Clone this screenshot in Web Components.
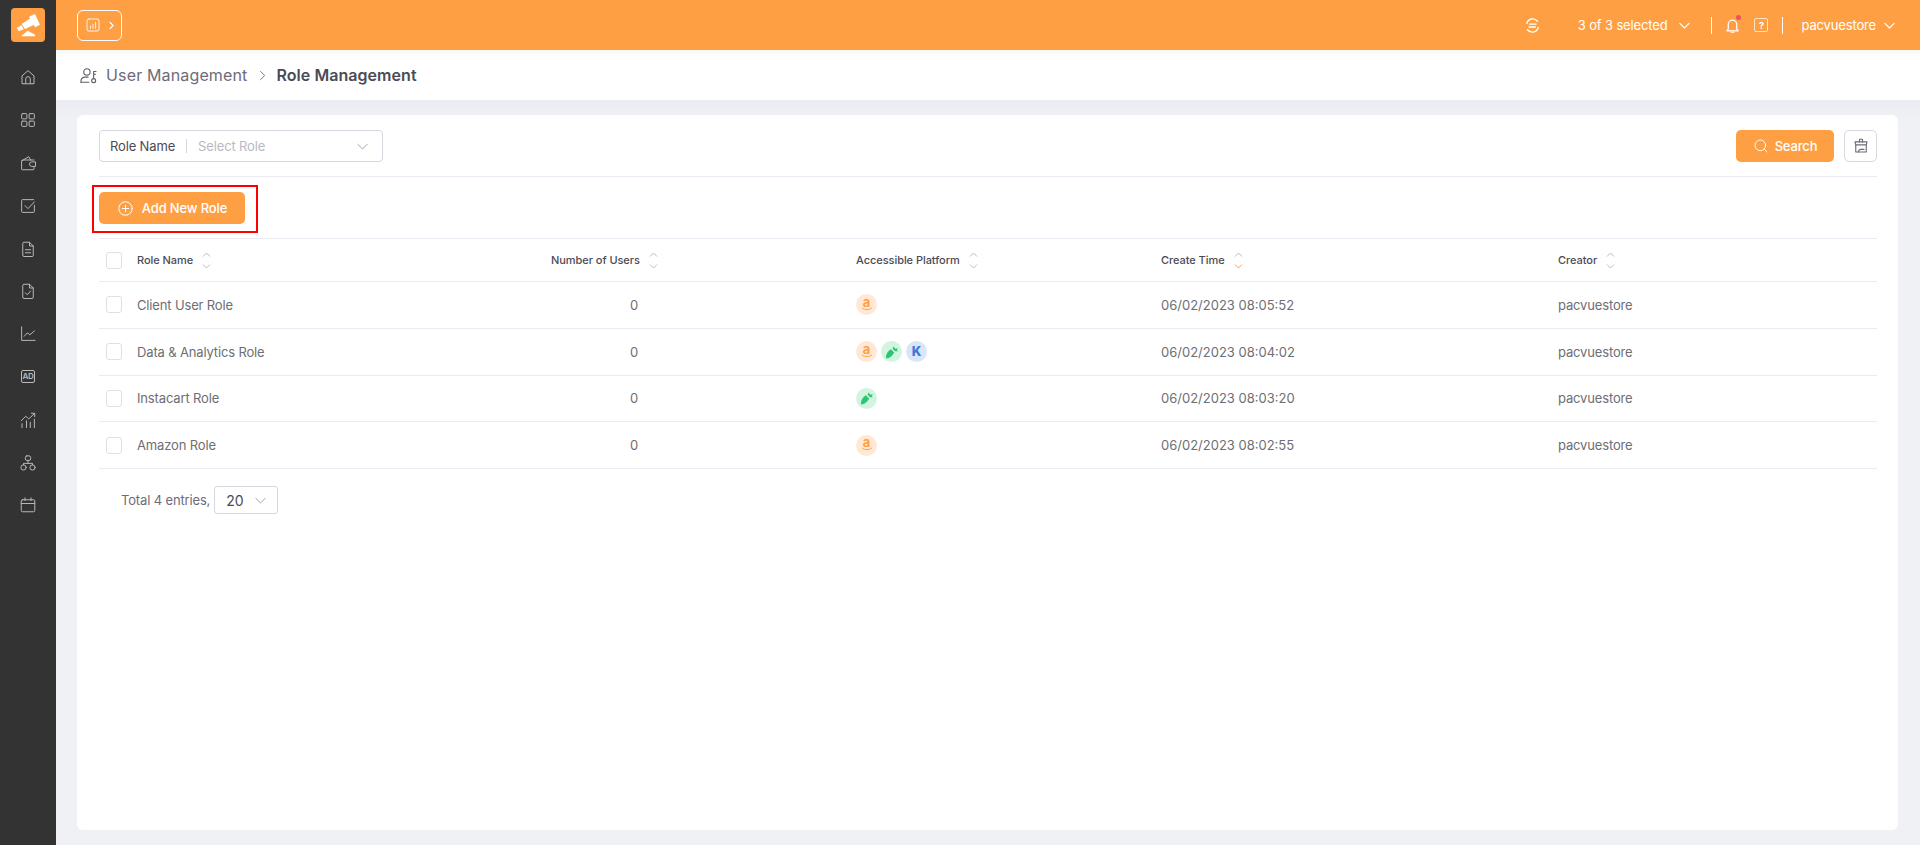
<!DOCTYPE html>
<html lang="en">
<head>
<meta charset="utf-8">
<title>Role Management</title>
<style>
  html, body { height: 100%; }
  body { margin: 0; font-family: Inter, "Liberation Sans", sans-serif; background: #f0f1f5; overflow: hidden; }
</style>
</head>
<body>
<app-shell>
  <side-nav slot="nav"></side-nav>
  <top-bar slot="top"></top-bar>
  <bread-crumb slot="crumb" parent="User Management" current="Role Management"></bread-crumb>
  <role-card></role-card>
</app-shell>

<script>
// Icon paths, all on a 24 box with stroke only.
const icons = {
  home: '<path d="M4 20.500V10.500L12 3.500l8 7v10z"/><path d="M9 20.500v-6a3 3 0 0 1 6 0v6"/>',
  grid: '<rect x="3.500" y="3.500" width="7" height="7" rx="1.200"/><rect x="13.500" y="3.500" width="7" height="7" rx="1.200"/><rect x="3.500" y="13.500" width="7" height="7" rx="1.200"/><rect x="13.500" y="13.500" width="7" height="7" rx="1.200"/>',
  wallet: '<path d="M20 8H5a1.500 1.500 0 0 0-1.500 1.500V20a1 1 0 0 0 1 1H19a1 1 0 0 0 1-1v-2.500"/><path d="M4 9l9-5.500L15.500 8"/><path d="M21.500 10.500H17a3 3 0 0 0 0 6h4.500z"/>',
  check: '<path d="M20.500 11v8.500a1 1 0 0 1-1 1h-15a1 1 0 0 1-1-1v-15a1 1 0 0 1 1-1h15"/><path d="M8 11.500l4 4 8.500-9"/>',
  doc: '<path d="M5 4.500a1.500 1.500 0 0 1 1.500-1.500H14l5 5v12.500a1.500 1.500 0 0 1-1.500 1.500h-11A1.500 1.500 0 0 1 5 20.500z"/><path d="M14 3v5h5"/><path d="M8.500 13h7M8.500 17h7"/>',
  docCheck: '<path d="M5 4.500a1.500 1.500 0 0 1 1.500-1.500H14l5 5v12.500a1.500 1.500 0 0 1-1.500 1.500h-11A1.500 1.500 0 0 1 5 20.500z"/><path d="M14 3v5h5"/><path d="M8.500 14.500l2.500 2.500 4.500-5"/>',
  line: '<path d="M3.500 2.500V20.500H21.500"/><path d="M7 15l4-4.500 3.500 2.500 6-5"/>',
  trend: '<path d="M3 13l6-6 4 3.500L20.500 3.500M16.500 3H21v4.500"/><path d="M4 17v5M10 13v9M15 15v7M20.500 11v11"/>',
  tree: '<rect x="8.500" y="2.500" width="7" height="6" rx="2"/><circle cx="6" cy="18" r="3.500"/><circle cx="18" cy="18" r="3.500"/><path d="M12 8.500v4M6 14.500v-2h12v2"/>',
  calendar: '<rect x="3" y="5" width="18" height="16" rx="1.500"/><path d="M3 10h18M8 2.500V6M16 2.500V6"/>',
  user: '<circle cx="10" cy="7.500" r="4"/><path d="M2.500 20.500v-1.500a5 5 0 0 1 5-5h4"/><path d="M2.500 20.500h10"/><circle cx="18.500" cy="18.500" r="2.500"/><path d="M18.500 16V7h3M18.500 10.500h2.500"/>',
  chevronDown: '<path d="M5.500 9l6.500 6.500L18.500 9"/>',
  chevronRight: '<path d="M9 5.500l6.500 6.500L9 18.500"/>',
  search: '<circle cx="11" cy="11" r="8"/><path d="M17 17l4 4"/>',
  plus: '<circle cx="12" cy="12" r="9.500"/><path d="M12 7.500v9M7.500 12h9"/>',
  broom: '<path d="M10 6.500V3h4v3.500"/><path d="M4 6.500h16l-1 4H5z"/><path d="M5 10.500V20h14v-9.500"/><path d="M8.500 20c.5-2.500 1-3.500 3-3.500H16"/>',
  bell: '<path d="M6 17V10.500a6 6 0 0 1 12 0V17l2 2.500H4z"/><path d="M10 21.500h4"/>',
  sync: '<path d="M4 9a8.500 8.500 0 0 1 15-3"/><path d="M20 15a8.500 8.500 0 0 1-15 3"/><path d="M8 10h9M7 14h9"/>',
  chart: '<rect x="4" y="4" width="16" height="16" rx="2.500"/><path d="M8.500 16.500v-3M12 16.500v-5.500M15.500 16.500V8.500"/>'
}

/**
 * Builds an inline svg for an icon.
 *
 * @param {string} name - Key in the icons table.
 * @param {number} size - Width and height in pixels.
 * @param {number} stroke - Stroke width in the 24 box.
 * @returns {string} The svg markup.
 */
const svg = (name, size, stroke = 1.5) =>
  `<svg width="${size}" height="${size}" viewBox="0 0 24 24" fill="none" stroke="currentColor" stroke-width="${stroke}" stroke-linecap="round" stroke-linejoin="round" style="display:block;flex:none">${icons[name]}</svg>`

/**
 * Base class: fills an open shadow root from a string.
 */
class ShadowElement extends HTMLElement {
  /**
   * Attaches the root.
   */
  constructor () {
    super()
    this.attachShadow({ mode: 'open' })
  }

  /**
   * Called after the element is inserted into the DOM.
   */
  connectedCallback () {
    this.shadowRoot.innerHTML = this.render()
  }
}

customElements.define('app-shell', class extends ShadowElement {
  render () {
    return `<style>
      :host { display: grid; grid-template-columns: 56px 1fr; grid-template-rows: 50px 50px 1fr; height: 845px; }
      .nav { grid-row: 1 / 4; display: block; }
      main { padding: 15px 22px 15px 21px; min-height: 0; display: flex; background: linear-gradient(#ebecf1, #f0f1f5 18px); }
    </style>
    <div class="nav"><slot name="nav"></slot></div>
    <slot name="top"></slot>
    <slot name="crumb"></slot>
    <main><slot></slot></main>`
  }
})

customElements.define('side-nav', class extends ShadowElement {
  render () {
    const items = ['home', 'grid', 'wallet', 'check', 'doc', 'docCheck', 'line', 'ad', 'trend', 'tree', 'calendar']
    return `<style>
      :host { display: block; height: 845px; box-sizing: border-box; padding-top: 8px; background: #333; color: #bbb; }
      .logo { display: block; margin: 0 auto; border-radius: 4px; background: #ff9f43; }
      nav { margin-top: 14px; display: grid; grid-auto-rows: 42.8px; justify-items: center; align-items: center; }
      .ad { width: 14px; height: 13px; box-sizing: border-box; border: 1px solid #bbb; border-radius: 2px; font-size: 8px; font-weight: 600; line-height: 11px; text-align: center; letter-spacing: -.3px; }
    </style>
    <svg class="logo" width="34" height="34" viewBox="0 0 34 34" fill="#fff">
      <polygon points="10.700,16 20,10 23.300,16.700 14,21"/>
      <polygon points="18,8.700 24,6 29,16.700 24,19.300"/>
      <polygon points="5.700,20 10.700,17.300 12.700,21.300 8,23.300"/>
      <polygon points="10,28.300 16.700,22.700 24,26.700 24,28.300"/>
    </svg>
    <nav>${items.map(i => i === 'ad' ? '<div class="ad">AD</div>' : svg(i, 18, 1.3)).join('')}</nav>`
  }
})

customElements.define('top-bar', class extends ShadowElement {
  render () {
    return `<style>
      :host { display: flex; align-items: center; height: 50px; background: #ff9f43; color: #fff; font-size: 13px; letter-spacing: -.15px; padding: 0 22px 0 21px; box-sizing: border-box; }
      .toggle { width: 45px; height: 31px; box-sizing: border-box; border: 1px solid #fff; border-radius: 6px; display: flex; align-items: center; gap: 4px; padding-left: 6px; }
      .spacer { flex: 1; }
      .sep { width: 1px; height: 17px; background: #fff; }
      .select { display: flex; align-items: center; }
      .dot { position: absolute; top: -2px; right: 0; width: 5px; height: 5px; border-radius: 50%; background: #ea5455; }
      .bell { position: relative; }
      .help { width: 14px; height: 14px; box-sizing: border-box; border: 1.500px solid #ffe3c8; border-radius: 2px; font-size: 9px; font-weight: 700; display: flex; align-items: center; justify-content: center; }
    </style>
    <div class="toggle">${svg('chart', 18, 1.2)}${svg('chevronRight', 11, 2.6)}</div>
    <div class="spacer"></div>
    ${svg('sync', 17, 2)}
    <div class="select" style="margin-left:37px">3 of 3 selected<span style="margin-left:9px">${svg('chevronDown', 17, 1.7)}</span></div>
    <div class="sep" style="margin-left:18px"></div>
    <div class="bell" style="margin-left:12px">${svg('bell', 17, 1.7)}<span class="dot"></span></div>
    <div class="help" style="margin-left:13px">?</div>
    <div class="sep" style="margin-left:14px"></div>
    <div class="select" style="margin-left:18px">pacvuestore<span style="margin-left:5px">${svg('chevronDown', 17, 1.7)}</span></div>`
  }
})

customElements.define('bread-crumb', class extends ShadowElement {
  render () {
    return `<style>
      :host { display: flex; align-items: center; height: 50px; background: linear-gradient(#f8f8f8, #fff 8px); padding-left: 23px; font-size: 16px; color: #6e6b7b; }
      span.p { letter-spacing: .15px; }
      b { font-weight: 600; color: #4b4b55; letter-spacing: .05px; }
      .sep { margin: 0 7px; }
      .u { margin-right: 8px; color: #5e5e66; }
    </style>
    <span class="u">${svg('user', 19, 1.4)}</span>
    <span class="p">${this.getAttribute('parent')}</span>
    <span class="sep">${svg('chevronRight', 15, 1.5)}</span>
    <b>${this.getAttribute('current')}</b>`
  }
})

customElements.define('app-button', class extends ShadowElement {
  render () {
    return `<style>
      :host { display: inline-flex; align-items: center; justify-content: center; gap: 6px; height: 32px; box-sizing: border-box; border-radius: 5px; background: #ff9f43; color: #fff; font-size: 13px; font-weight: 500; letter-spacing: -.15px; line-height: normal; }
    </style>${svg(this.getAttribute('icon'), +this.getAttribute('size') || 16, 1.4)}<slot></slot>`
  }
})

customElements.define('check-box', class extends ShadowElement {
  render () {
    return `<style>
      :host { display: block; width: 16px; height: 17px; box-sizing: border-box; border: 1px solid #dfdfe6; border-radius: 3px; background: #fff; }
    </style>`
  }
})

customElements.define('sort-arrows', class extends ShadowElement {
  render () {
    const down = this.hasAttribute('active') ? '#ff9f43' : '#b9b9c3'
    return `<style>
      :host { display: inline-flex; flex-direction: column; gap: 7px; margin-left: 9px; vertical-align: middle; }
      svg { display: block; }
    </style>
    <svg width="9" height="5" viewBox="0 0 9 5" fill="none" stroke="#b9b9c3"><path d="M1 4.500l3.500-3.500 3.500 3.500"/></svg>
    <svg width="9" height="5" viewBox="0 0 9 5" fill="none" stroke="${down}"><path d="M1 .5l3.500 3.500 3.500-3.500"/></svg>`
  }
})

customElements.define('platform-badge', class extends ShadowElement {
  render () {
    const kind = this.getAttribute('kind')
    const marks = {
      amazon: '<span class="a">a</span><svg class="smile" width="12" height="4" viewBox="0 0 12 4" fill="none" stroke="#ff9f43" stroke-width="1"><path d="M1 .8c3 2.400 7 2.400 10 0"/></svg>',
      instacart: '<svg width="14" height="14" viewBox="0 0 13 13" fill="#28c76f"><path d="M1 12.500c-.5-3 1.500-7 4.500-8.500l3 3c-1.500 3-4.500 5.500-7.500 5.500z"/><path d="M8 1.500l1.500 2L12 3l-1 1.500.8 1.500-2.800-.5-2-2.200z"/></svg>',
      kroger: '<span class="k">K</span>'
    }
    const bg = { amazon: '#ffe9d6', instacart: '#d3f4e1', kroger: '#d9e6f8' }
    return `<style>
      :host { display: flex; flex-direction: column; align-items: center; justify-content: center; width: 21px; height: 21px; border-radius: 50%; background: ${bg[kind]}; }
      .a { color: #ff9f43; font-size: 13px; font-weight: 700; line-height: 10px; margin-top: -2px; }
      .smile { display: block; }
      .k { color: #3c78d8; font-size: 13px; font-weight: 800; line-height: 1; }
    </style>${marks[kind]}`
  }
})

customElements.define('role-row', class extends ShadowElement {
  render () {
    const head = this.hasAttribute('head')
    return `<style>
      :host { display: grid; grid-template-columns: 38px 414px 305px 305px 397px 319px; align-items: center; height: ${head ? 43 : 46.800}px; box-sizing: border-box; border-bottom: 1px solid #ebe9f1; color: ${head ? '#4b4b55' : '#6e6e74'}; font-size: ${head ? 11 : 13}px; font-weight: ${head ? 500 : 400}; letter-spacing: ${head ? '-.05px' : '-.15px'}; }
      .box { padding-left: 7px; }
    </style>
    <div class="box"><check-box></check-box></div>
    <slot></slot>`
  }
})

customElements.define('platform-list', class extends ShadowElement {
  render () {
    const kinds = this.getAttribute('kinds').split(' ')
    return `<style>:host { display: flex; gap: 4px; }</style>
      ${kinds.map(k => `<platform-badge kind="${k}"></platform-badge>`).join('')}`
  }
})

customElements.define('role-card', class extends ShadowElement {
  render () {
    const rows = [
      ['Client User Role', 'amazon', '06/02/2023 08:05:52'],
      ['Data &amp; Analytics Role', 'amazon instacart kroger', '06/02/2023 08:04:02'],
      ['Instacart Role', 'instacart', '06/02/2023 08:03:20'],
      ['Amazon Role', 'amazon', '06/02/2023 08:02:55']
    ]
    return `<style>
      :host { display: block; flex: 1; background: #fff; border-radius: 6px; padding: 15px 21px 0 22px; }
      .filter { display: flex; align-items: center; height: 32px; padding-bottom: 14px; border-bottom: 1px solid #ebe9f1; }
      .select { width: 284px; height: 32px; box-sizing: border-box; border: 1px solid #d8d6de; border-radius: 4px; display: flex; align-items: center; padding: 0 11px 0 10px; font-size: 13px; letter-spacing: -.15px; color: #4b4b55; }
      .select i { width: 1px; height: 14px; background: #d8d6de; margin: 0 11px; }
      .select span.ph { flex: 1; color: #b9b9c3; }
      .select svg { color: #9a9aa3; }
      .spacer { flex: 1; }
      .search { width: 98px; }
      .broom { width: 33px; height: 32px; box-sizing: border-box; border: 1px solid #d8d6de; border-radius: 5px; margin-left: 10px; display: flex; align-items: center; justify-content: center; color: #6e6b7b; }
      .action { height: 62px; box-sizing: border-box; padding-top: 8px; border-bottom: 1px solid #ebe9f1; }
      .mark { display: inline-block; margin-left: -7px; border: 2px solid #f00; padding: 5px 11px 7px 5px; line-height: 0; }
      .add { width: 146px; gap: 8px; }
      .num { padding-left: 79px; }
      .date { letter-spacing: 0; }
      .foot { display: flex; align-items: center; gap: 4px; margin-top: 17px; padding-left: 22px; color: #6e6b7b; font-size: 13px; letter-spacing: -.15px; }
      .size { width: 64px; height: 28px; box-sizing: border-box; border: 1px solid #d8d6de; border-radius: 3px; display: flex; align-items: center; justify-content: space-between; padding: 0 8px 0 11px; color: #4b4b55; font-size: 14px; letter-spacing: 0; }
      .size svg { color: #9a9aa3; }
    </style>
    <div class="filter">
      <div class="select">Role Name<i></i><span class="ph">Select Role</span>${svg('chevronDown', 17, 1.3)}</div>
      <div class="spacer"></div>
      <app-button class="search" icon="search">Search</app-button>
      <div class="broom">${svg('broom', 18, 1.5)}</div>
    </div>
    <div class="action"><span class="mark"><app-button class="add" icon="plus" size="17">Add New Role</app-button></span></div>
    <role-row head>
      <div>Role Name<sort-arrows></sort-arrows></div>
      <div>Number of Users<sort-arrows></sort-arrows></div>
      <div>Accessible Platform<sort-arrows></sort-arrows></div>
      <div>Create Time<sort-arrows active></sort-arrows></div>
      <div>Creator<sort-arrows></sort-arrows></div>
    </role-row>
    ${rows.map(r => `<role-row>
      <div>${r[0]}</div>
      <div class="num">0</div>
      <platform-list kinds="${r[1]}"></platform-list>
      <div class="date">${r[2]}</div>
      <div>pacvuestore</div>
    </role-row>`).join('')}
    <div class="foot">Total 4 entries,<div class="size">20${svg('chevronDown', 17, 1.3)}</div></div>`
  }
})
</script>
</body>
</html>
